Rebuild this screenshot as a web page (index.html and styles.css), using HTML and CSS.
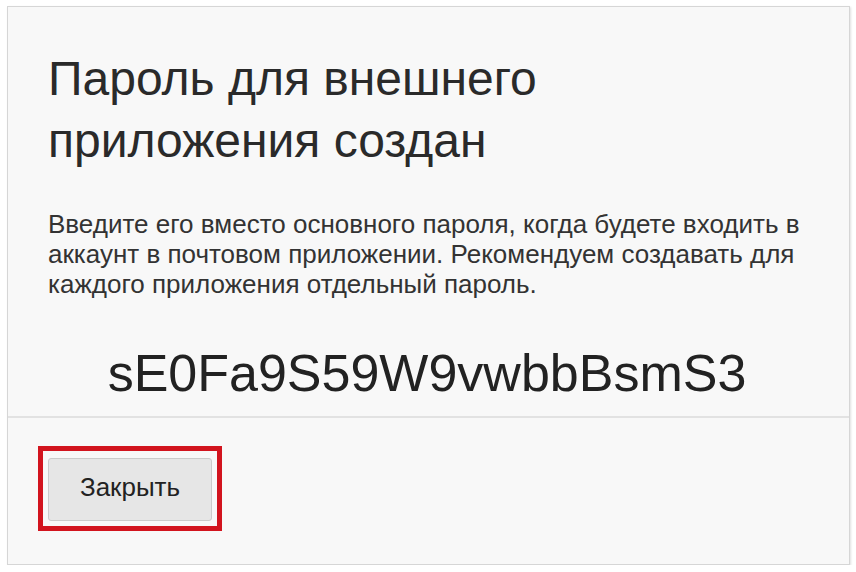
FILE: index.html
```html
<!DOCTYPE html>
<html lang="ru">
<head>
<meta charset="utf-8">
<link rel="stylesheet" href="styles.css">
</head>
<body>
<div class="card">
  <div class="main">
    <h1 class="title">Пароль для внешнего<br>приложения создан</h1>
    <p class="desc">Введите его вместо основного пароля, когда будете входить в аккаунт в почтовом приложении. Рекомендуем создавать для каждого приложения отдельный пароль.</p>
    <div class="pass">sE0Fa9S59W9vwbbBsmS3</div>
  </div>
  <div class="footer">
    <div class="highlight">
      <button class="btn">Закрыть</button>
    </div>
  </div>
</div>
</body>
</html>
```
FILE: styles.css
```css
html, body {
  margin: 0;
  padding: 0;
  background: #ffffff;
}
body {
  font-family: "Liberation Sans", Arial, sans-serif;
  color: #262626;
}
.card {
  box-sizing: border-box;
  margin: 6px 0 0 7px;
  width: 843px;
  height: 559px;
  background: #f8f8f8;
  border: 1px solid #d6d6d6;
  box-shadow: 1px 1px 2px rgba(0,0,0,0.12);
}
.main {
  box-sizing: border-box;
  height: 411px;
  padding: 41px 24px 0 40px;
  border-bottom: 2px solid #e2e2e2;
}
.title {
  margin: 0;
  font-weight: normal;
  font-size: 48px;
  line-height: 62px;
  color: #2a2a2a;
}
.desc {
  margin: 37px 0 0;
  font-size: 26px;
  line-height: 30px;
  color: #333333;
}
.pass {
  margin-top: 44px;
  font-size: 52px;
  line-height: 60px;
  text-align: center;
  color: #222222;
  padding-right: 19px;
}
.footer {
  padding: 28px 0 0 30px;
}
.highlight {
  display: inline-block;
  border: 5px solid #d2141e;
  padding: 7px 5px 5px 5px;
}
.btn {
  display: block;
  box-sizing: border-box;
  width: 164px;
  height: 63px;
  margin: 0;
  font-family: "Liberation Sans", Arial, sans-serif;
  font-size: 26px;
  color: #222222;
  background: #e6e6e6;
  border: 1px solid #cbcbcb;
  border-radius: 3px;
  padding: 0 0 4px;
}
```
